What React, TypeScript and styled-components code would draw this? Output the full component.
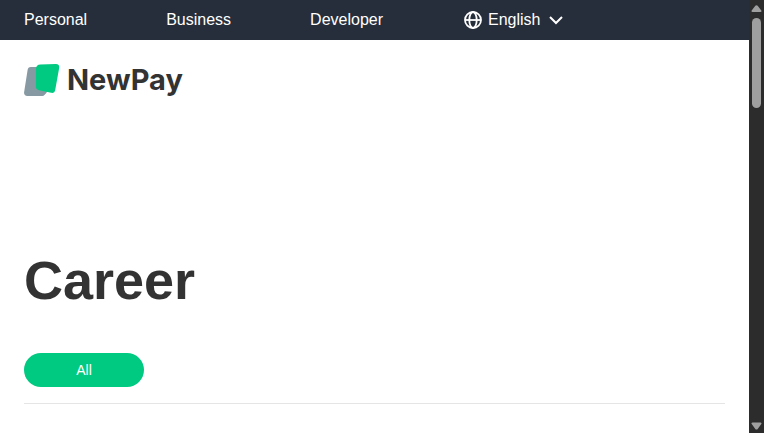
import React from "react";
import styled, { createGlobalStyle } from "styled-components";

const GlobalStyle = createGlobalStyle`
  * { box-sizing: border-box; }
  body {
    margin: 0;
    background: #ffffff;
    color: #333333;
    font-family: "Liberation Sans", Arial, sans-serif;
  }
`;

const Window = styled.div`
  display: grid;
  grid-template-columns: minmax(0, 1fr) 15px;
  height: 100vh;
  overflow: hidden;
`;

const Page = styled.div`
  display: flex;
  flex-direction: column;
`;

const TopBar = styled.nav`
  display: flex;
  align-items: center;
  gap: 79px;
  height: 40px;
  padding: 0 24px;
  background: #272e3b;
`;

const NavLink = styled.a`
  color: #ffffff;
  font-size: 16px;
  line-height: 24px;
  text-decoration: none;
`;

const LanguageButton = styled.button`
  display: flex;
  align-items: center;
  gap: 6px;
  padding: 0 2px;
  border: 0;
  background: none;
  color: #ffffff;
  font: inherit;
  font-size: 16px;
  line-height: 24px;
  cursor: pointer;
`;

const Header = styled.header`
  display: flex;
  padding: 24px;
`;

const LogoLink = styled.a`
  display: flex;
  align-items: center;
  gap: 7px;
  height: 32px;
  color: #333333;
  text-decoration: none;
`;

const LogoText = styled.span`
  font-family: Inter, sans-serif;
  font-size: 29px;
  font-weight: 700;
  line-height: 32px;
`;

const Content = styled.main`
  padding: 120px 24px 0;
`;

const Title = styled.h1`
  margin: 0;
  font-size: 54px;
  font-weight: 700;
  line-height: 80px;
`;

const Filters = styled.div`
  display: flex;
  margin-top: 33px;
  padding-bottom: 16px;
  border-bottom: 1px solid #e5e5e5;
`;

const FilterButton = styled.button`
  width: 120px;
  height: 34px;
  padding: 0;
  border: 0;
  border-radius: 17px;
  background: #00c981;
  color: #ffffff;
  font: inherit;
  font-size: 14px;
  line-height: 20px;
  cursor: pointer;
`;

const ScrollTrack = styled.div`
  display: flex;
  flex-direction: column;
  align-items: center;
  gap: 5px;
  padding: 5px 0 3px;
  background: #2c2c2c;
`;

const ScrollThumb = styled.div`
  width: 9px;
  height: 90px;
  margin-bottom: auto;
  border-radius: 5px;
  background: #9f9f9f;
`;

const LogoMark = () => (
  <svg width="36" height="32" viewBox="0 0 36 32" aria-hidden="true">
    <path d="M6.800 3h10.400c2.200 0 3.500 1.500 3.800 3.400l2.300 19.800c.1 1-.3 2-1 2.800l-1.600 1.800c-.7.8-1.500 1.200-2.500 1.200H3.300C1 32-.2 30.300.1 28.200L3.600 6C3.900 4.200 4.900 3 6.800 3z" fill="#8799a3" />
    <path d="M16.500.500 31.900 0c2.400 0 3.700 1.600 3.300 3.800l-4 22.200c-.4 2.300-2 3.300-4.100 2.800l-12.100-2.600c-2-.5-3.100-1.700-3.100-3.800V5.200c0-2.900 1.700-4.600 4.600-4.700z" fill="#00c981" />
  </svg>
);

const Globe = () => (
  <svg width="18" height="18" viewBox="0 0 18 18" fill="none" stroke="currentColor" strokeWidth="1.8" aria-hidden="true">
    <circle cx="9" cy="9" r="8" />
    <ellipse cx="9" cy="9" rx="3.700" ry="8" />
    <path d="M1 9h16" />
  </svg>
);

const Chevron = () => (
  <svg width="18" height="18" viewBox="0 0 18 18" fill="none" stroke="currentColor" strokeWidth="2" aria-hidden="true">
    <path d="m3 6 6 6 6-6" />
  </svg>
);

const Arrow = ({ down = false }: { down?: boolean }) => (
  <svg width="11" height="8" viewBox="0 0 11 8" aria-hidden="true">
    <path
      d={down ? "M1.500.500h8c1 0 1.300.900.800 1.500L6.700 6.900c-.6.800-1.800.8-2.400 0L.7 2C.2 1.400.5.500 1.500.500z" : "M1.500 7h8c1 0 1.300-.9.800-1.500L6.700.800c-.6-.8-1.800-.8-2.400 0L.7 5.500C.2 6.100.5 7 1.500 7z"}
      fill="#9f9f9f"
    />
  </svg>
);

const sections = ["Personal", "Business", "Developer"];

export default function App() {
  return (
    <>
      <GlobalStyle />
      <Window>
        <Page>
          <TopBar aria-label="Main">
            {sections.map((name) => (
              <NavLink key={name} href="#">{name}</NavLink>
            ))}
            <LanguageButton type="button">
              <Globe />
              English
              <Chevron />
            </LanguageButton>
          </TopBar>
          <Header>
            <LogoLink href="#">
              <LogoMark />
              <LogoText>NewPay</LogoText>
            </LogoLink>
          </Header>
          <Content>
            <Title>Career</Title>
            <Filters>
              <FilterButton type="button" aria-pressed="true">All</FilterButton>
            </Filters>
          </Content>
        </Page>
        <ScrollTrack aria-hidden="true">
          <Arrow />
          <ScrollThumb />
          <Arrow down />
        </ScrollTrack>
      </Window>
    </>
  );
}
